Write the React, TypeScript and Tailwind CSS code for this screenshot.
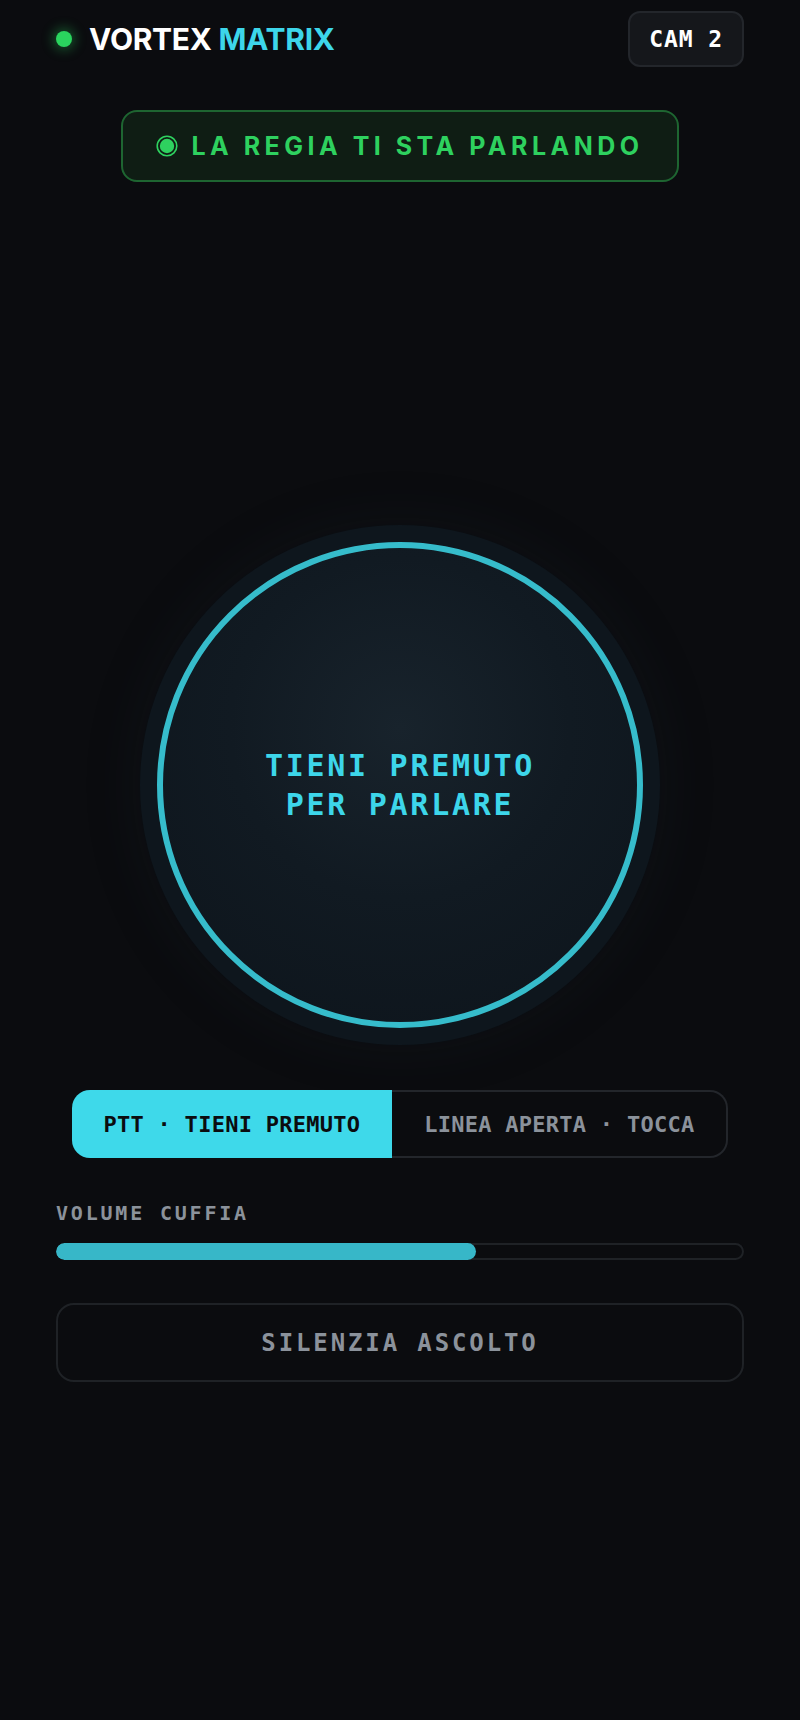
import React from "react";

const mono = { fontFamily: '"DejaVu Sans Mono", "Liberation Mono", monospace' };
const sans = { fontFamily: 'Inter, "Noto Sans", sans-serif' };

export default function App() {
  return (
    <div className="min-h-[1720px] w-full bg-[#0b0c0f] px-14 pt-[11px]" style={sans}>
      {/* Header */}
      <header className="flex items-center justify-between h-[56px]">
        <div className="flex items-center gap-[17px]">
          <span className="block w-4 h-4 rounded-full bg-[#2ad45e] shadow-[0_0_12px_3px_rgba(42,212,94,0.35)]" />
          <h1 className="text-[30px] font-bold tracking-[-0.01em] leading-none text-white">
            VORTEX <span className="text-[#3dd6ea]">MATRIX</span>
          </h1>
        </div>
        <button
          className="h-[56px] px-[19px] rounded-[12px] border-2 border-[#23262b] bg-[#15171b] text-white text-[23px] font-bold tracking-[0.04em]"
          style={mono}
        >
          CAM 2
        </button>
      </header>

      {/* Status badge */}
      <div className="flex justify-center mt-[43px]">
        <div className="flex items-center gap-[13px] h-[72px] px-[33px] rounded-[16px] border-2 border-[#1e6531] bg-[#0f1d14]">
          <svg width="22" height="22" viewBox="0 0 22 22">
            <circle cx="11" cy="11" r="9.8" fill="none" stroke="#2ed15f" strokeWidth="1.6" />
            <circle cx="11" cy="11" r="7.2" fill="#2ed15f" />
          </svg>
          <span className="text-[25px] font-bold tracking-[0.18em] text-[#2ed15f] leading-none">
            LA REGIA TI STA PARLANDO
          </span>
        </div>
      </div>

      {/* PTT button */}
      <div className="flex justify-center mt-[343px]">
        <div className="w-[520px] h-[520px] rounded-full bg-[#0e161d] flex items-center justify-center shadow-[0_0_50px_8px_rgba(22,40,48,0.16)]">
          <button
            className="w-[486px] h-[486px] rounded-full border-[6px] border-[#36bccb] bg-[radial-gradient(circle_at_50%_38%,#18232c_0%,#111a22_45%,#0d141b_100%)] flex items-center justify-center"
          >
            <span
              className="text-[30px] font-bold leading-[39px] tracking-[0.09em] text-[#3dd6ea] text-center"
              style={mono}
            >
              TIENI PREMUTO
              <br />
              PER PARLARE
            </span>
          </button>
        </div>
      </div>

      {/* Mode switch */}
      <div className="flex justify-center mt-[45px]">
        <div className="inline-flex h-[68px] text-[22px] font-bold tracking-[0.012em]" style={mono}>
          <button className="px-8 rounded-l-[18px] bg-[#3ed9ea] text-[#0b0c0f]">PTT · TIENI PREMUTO</button>
          <button className="px-8 rounded-r-[18px] border-2 border-l-0 border-[#23262b] bg-[#0b0c0f] text-[#8b929b]">
            LINEA APERTA · TOCCA
          </button>
        </div>
      </div>

      {/* Volume */}
      <div className="mt-[45px]">
        <div className="text-[20px] font-bold tracking-[0.14em] text-[#8b929b] leading-none" style={mono}>
          VOLUME CUFFIA
        </div>
        <div className="mt-[20px] h-[17px] rounded-full bg-[#0b0c0f] shadow-[inset_0_0_0_2px_#1f2226] overflow-hidden">
          <div className="h-full rounded-full bg-[#37b7c8]" style={{ width: "61%" }} />
        </div>
      </div>

      {/* Mute */}
      <button
        className="mt-[43px] w-full h-[79px] rounded-[18px] border-2 border-[#1f2226] bg-[#0b0c0f] text-[24px] font-bold tracking-[0.12em] text-[#8b929b]"
        style={mono}
      >
        SILENZIA ASCOLTO
      </button>
    </div>
  );
}
